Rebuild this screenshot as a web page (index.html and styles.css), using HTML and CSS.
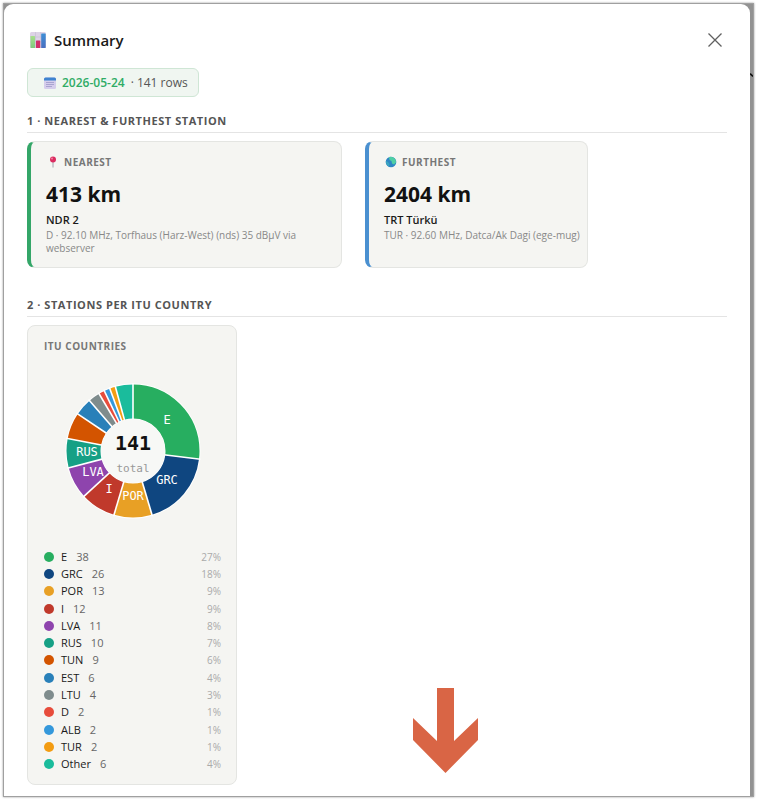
FILE: index.html
```html
<!DOCTYPE html>
<html lang="en">
<head>
<meta charset="utf-8">
<meta name="viewport" content="width=device-width, initial-scale=1">
<title>Summary</title>
<link rel="stylesheet" href="styles.css">
</head>
<body>
<div class="backdrop">
  <svg class="edge-mark" viewBox="0 0 3 5" aria-hidden="true"><path d="M0 .5L3 3.5" stroke="#111" stroke-width="1.6"/></svg>
  <main class="modal">
    <header class="modal-head">
      <svg class="head-icon" viewBox="0 0 16 16" aria-hidden="true">
        <defs>
          <linearGradient id="bar-green" x2="0" y2="1"><stop stop-color="#a8e08c"/><stop offset="1" stop-color="#7fc77f"/></linearGradient>
          <linearGradient id="bar-blue" x2="0" y2="1"><stop stop-color="#3d8fd6"/><stop offset="1" stop-color="#4a6fc0"/></linearGradient>
        </defs>
        <rect width="16" height="16" rx="1.5" fill="#ddd3e6"/>
        <path d="M0 5h16M0 10h16M5.5 0v16M10.700 0v16" stroke="#c5bdd3" stroke-width=".6"/>
        <rect x=".5" y="4" width="4.500" height="12" rx=".6" fill="url(#bar-green)"/>
        <rect x="6" y="8.500" width="4.200" height="7.500" rx=".6" fill="#d02f6a"/>
        <rect x="11.200" y="1.500" width="4.500" height="14.500" rx=".6" fill="url(#bar-blue)"/>
      </svg>
      <h1>Summary</h1>
      <button class="close" type="button" aria-label="Close">
        <svg viewBox="0 0 14 14"><path d="M.5.5l13 13M13.500.5l-13 13" stroke="#606060" stroke-width="1.300" fill="none"/></svg>
      </button>
    </header>

    <div class="date-chip">
      <svg class="chip-icon" viewBox="0 0 12 12" aria-hidden="true">
        <rect y=".5" width="12" height="11.500" rx="1.500" fill="#d5cdec"/>
        <path d="M0 3.500V2Q0 .5 1.500.5h9Q12 .5 12 2v1.500z" fill="#3f83d0"/>
        <path d="M2.500 5.500h7M2.500 7.500h7M2.500 9.500h5" stroke="#7d79b5" stroke-width="1" stroke-dasharray="1 1"/>
      </svg>
      <strong>2026-05-24</strong>
      <span>· 141 rows</span>
    </div>

    <section class="distance">
      <h2>1 · Nearest &amp; furthest station</h2>
      <div class="cards">
        <article class="card near">
          <h3><svg class="card-icon" viewBox="0 0 12 12" aria-hidden="true"><path d="M6 6v5.500" stroke="#a9a9b4" stroke-width="1.100"/><circle cx="6" cy="3.500" r="3" fill="#db2c60"/><circle cx="5" cy="2.500" r=".9" fill="#f48aaa"/></svg>Nearest</h3>
          <p class="km">413 km</p>
          <p class="station">NDR 2</p>
          <p class="detail">D · 92.10 MHz, Torfhaus (Harz-West) (nds) 35 dBµV via webserver</p>
        </article>
        <article class="card far">
          <h3><svg class="card-icon" viewBox="0 0 12 12" aria-hidden="true"><circle cx="6" cy="6" r="5.300" fill="#2f86c4"/><path d="M4 1Q7 0 9.500 2.200 11.300 4 11 6.500L9 8.500 7 7.500 6.500 5 4.500 4z" fill="#4fcfa4"/><path d="M1 5l2 1 1.500 2L4 10.500Q1 9 .8 6z" fill="#3aa5c0"/></svg>Furthest</h3>
          <p class="km">2404 km</p>
          <p class="station">TRT Türkü</p>
          <p class="detail">TUR · 92.60 MHz, Datca/Ak Dagi (ege-mug)</p>
        </article>
      </div>
    </section>

    <section class="countries">
      <h2>2 · Stations per ITU country</h2>
      <article class="card chart-card">
        <h3>ITU countries</h3>
        <svg class="donut" viewBox="0 0 136 136" role="img" aria-label="Stations per ITU country">
          <circle cx="68" cy="68" r="67.500" fill="#fff"/>
          <g id="slices" fill="none" stroke-width="34" transform="rotate(-90 68 68)"></g>
          <g id="dividers" stroke="#fff" stroke-width="1.600"></g>
          <circle cx="68" cy="68" r="32" fill="#f7f8f6"/>
          <g class="slice-label">
            <text x="102" y="41">E</text>
            <text x="102" y="101">GRC</text>
            <text x="68" y="117">POR</text>
            <text x="44" y="110">I</text>
            <text x="28" y="93">LVA</text>
            <text x="22" y="73">RUS</text>
          </g>
          <text class="sum" x="68" y="67">141</text>
          <text class="sum-label" x="68" y="89">total</text>
        </svg>
        <ul class="legend" id="legend"></ul>
      </article>
    </section>

    <svg class="arrow" viewBox="0 0 65 85" aria-hidden="true"><path d="M24 0h17v53l24-23v22L32.500 85 0 52V30l24 23z" fill="#d96545"/></svg>
  </main>
</div>
<script src="chart.js"></script>
</body>
</html>
```
FILE: styles.css
```css
* { box-sizing: border-box; }

body {
  margin: 0;
  background: #fff;
  color: #1a1a1a;
  font-family: "Open Sans", "Noto Sans", sans-serif;
}

h1, h2, h3, p, ul { margin: 0; padding: 0; }

.backdrop {
  position: relative;
  min-height: calc(100vh - 6px);
  margin: 3px;
  padding-right: 3px;
  display: flex;
  background: #929292;
  border: 1px solid #a0a0a0;
  box-shadow: 0 0 2px #999;
}

.edge-mark {
  position: absolute;
  top: 69px;
  right: 0;
  width: 3px;
  height: 5px;
}

.modal {
  position: relative;
  flex: 1;
  padding: 22px 23px 10px;
  background: #fff;
  border-radius: 9px 9px 0 0;
}

.modal-head {
  display: flex;
  align-items: center;
  height: 28px;
  padding: 0 5px 0 3px;
}

.head-icon { width: 16px; height: 16px; margin-right: 8px; }

h1 { font-size: 15px; font-weight: 600; line-height: 28px; }

.close {
  margin-left: auto;
  padding: 0;
  border: 0;
  background: none;
  display: flex;
}

.close svg { width: 14px; height: 14px; }

.date-chip {
  display: inline-flex;
  align-items: center;
  height: 29px;
  margin-top: 14px;
  padding: 0 10px 0 16px;
  border: 1px solid #cfe6d5;
  border-radius: 6px;
  background: #f0f6f1;
  color: #555;
  font-size: 12px;
}

.chip-icon { width: 12px; height: 12px; margin-right: 6px; }
.date-chip strong { margin-right: 6px; color: #2fac66; font-weight: 600; }

h2 {
  padding-bottom: 3px;
  border-bottom: 1px solid #e4e4e4;
  color: #555;
  font-size: 11px;
  font-weight: 700;
  line-height: 16px;
  letter-spacing: 0.05em;
  text-transform: uppercase;
}

.distance { margin-top: 16px; }
.countries { margin-top: 29px; }

.cards {
  display: grid;
  grid-template-columns: 45% max-content;
  gap: 23px;
  margin-top: 8px;
}

.card {
  border: 1px solid #e4e5e2;
  border-radius: 8px;
  background: #f5f5f2;
}

.cards .card { min-height: 127px; padding: 12px 7px 12px 15px; border-left-width: 4px; }
.card.near { border-left-color: #34a668; }
.card.far { border-left-color: #4a90d0; }

h3 {
  display: flex;
  align-items: center;
  color: #777;
  font-size: 10px;
  font-weight: 700;
  line-height: 16px;
  letter-spacing: 0.05em;
  text-transform: uppercase;
}

.card-icon { width: 12px; height: 12px; margin: 0 5px 0 1px; }
.km { margin-top: 7px; color: #111; font-size: 21px; font-weight: 700; line-height: 34px; }
.station { font-size: 11px; font-weight: 600; line-height: 18px; }
.detail { color: #888; font-size: 10px; line-height: 13px; }

.chart-card {
  width: 30%;
  min-width: 210px;
  margin-top: 8px;
  padding: 12px 15px 11px 16px;
}

.donut { display: block; width: 136px; height: 136px; margin: 29px auto; }

.donut text { font-family: "DejaVu Sans Mono", monospace; text-anchor: middle; }
.slice-label { fill: #fff; font-size: 12px; }
.donut .sum { fill: #111; font-size: 20px; font-weight: 700; }
.donut .sum-label { fill: #999; font-size: 11px; }

.legend {
  display: grid;
  grid-auto-rows: 1fr;
  height: 225px;
  list-style: none;
  font-size: 11px;
}

.legend li { display: flex; align-items: center; line-height: 16px; }
.dot { width: 10px; height: 10px; margin-right: 7px; border-radius: 50%; }
.count { margin-left: 9px; color: #666; }
.share { margin-left: auto; color: #aaa; font-size: 10px; }

.arrow {
  position: absolute;
  bottom: 23px;
  left: 409px;
  width: 65px;
  height: 85px;
}
```
FILE: chart.js
```js
const data = [
  ["E", 38, "#27ae60"], ["GRC", 26, "#0f4680"], ["POR", 13, "#e8a025"],
  ["I", 12, "#c0392b"], ["LVA", 11, "#8e44ad"], ["RUS", 10, "#16a085"],
  ["TUN", 9, "#d35400"], ["EST", 6, "#2980b9"], ["LTU", 4, "#7f8c8d"],
  ["D", 2, "#e74c3c"], ["ALB", 2, "#3498db"], ["TUR", 2, "#f39c12"],
  ["Other", 6, "#1abc9c"]
];
const total = data.reduce((sum, row) => sum + row[1], 0);
let start = 0;
let slices = "";
let dividers = "";
let legend = "";
for (const [name, count, color] of data) {
  slices += `<circle cx="68" cy="68" r="49.5" pathLength="${total}" stroke="${color}" stroke-dasharray="${count} ${total - count}" stroke-dashoffset="${-start}"/>`;
  dividers += `<path d="M68 0V37" transform="rotate(${start / total * 360} 68 68)"/>`;
  legend += `<li><span class="dot" style="background:${color}"></span><span>${name}</span><span class="count">${count}</span><span class="share">${Math.round(count / total * 100)}%</span></li>`;
  start += count;
}
document.getElementById("slices").innerHTML = slices;
document.getElementById("dividers").innerHTML = dividers;
document.getElementById("legend").innerHTML = legend;
```
